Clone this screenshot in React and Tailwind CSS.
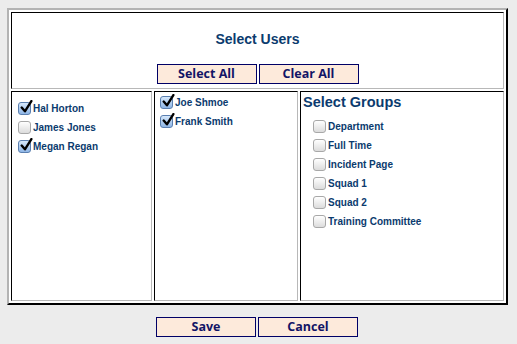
import { useState } from 'react';

const users1 = [
    { name: 'Hal Horton', checked: true },
    { name: 'James Jones', checked: false },
    { name: 'Megan Regan', checked: true },
];

const users2 = [
    { name: 'Joe Shmoe', checked: true },
    { name: 'Frank Smith', checked: true },
];

const groups = ['Department', 'Full Time', 'Incident Page', 'Squad 1', 'Squad 2', 'Training Committee'];

const Box = ({ checked, onClick }) => (
    <span
        onClick={onClick}
        className={`relative w-[13px] h-[13px] shrink-0 rounded-[3px] border ${
            checked
                ? 'border-[#5a7fb0] bg-gradient-to-b from-[#d6e8fb] to-[#8fb6e6]'
                : 'border-[#a8a8a8] bg-gradient-to-b from-[#ffffff] to-[#dcdcdc]'
        }`}
    >
        {checked && (
            <svg viewBox="0 0 13 13" className="absolute left-[0px] top-[-3px] w-[14px] h-[14px]">
                <path d="M2.5 7 L5.5 10.5 L11.5 1" fill="none" stroke="#000" strokeWidth="2.2" strokeLinecap="round" strokeLinejoin="round" />
            </svg>
        )}
    </span>
);

const Row = ({ label, initial }) => {
    const [on, setOn] = useState(initial);
    return (
        <div className="flex items-center h-[19px] gap-[2px]">
            <Box checked={on} onClick={() => setOn(!on)} />
            <span className="text-[10px] font-bold text-[#0b3b6e] leading-none">{label}</span>
        </div>
    );
};

const Btn = ({ children }) => (
    <button className="w-[100px] h-[20px] bg-[#fdeadb] border border-[#000066] text-[#121466] text-[12.5px] font-bold font-['Open_Sans',sans-serif] leading-none">
        {children}
    </button>
);

const cell = 'border border-t-black border-l-black border-r-[#b8b8b8] border-b-[#b8b8b8] bg-white';

export default function App() {
    return (
        <div className="w-[517px] h-[344px] bg-[#ececec] font-['Liberation_Sans',Arial,sans-serif] pt-[8px] pl-[7px]">
            <div className="w-[501px] h-[297px] border-2 border-t-[#b3b3b3] border-l-[#b3b3b3] border-r-black border-b-black bg-white p-[2px] flex flex-col gap-[2px]">
                <div className={`${cell} h-[77px] flex flex-col items-center`}>
                    <h1 className="mt-[19px] text-[14px] font-bold text-[#0b3b6e] leading-none">Select Users</h1>
                    <div className="mt-[18px] flex gap-[2px]">
                        <Btn>Select All</Btn>
                        <Btn>Clear All</Btn>
                    </div>
                </div>
                <div className="flex-1 flex gap-[2px]">
                    <div className={`${cell} w-[141px] pl-[6px] pt-[7px]`}>
                        {users1.map((u) => (
                            <Row key={u.name} label={u.name} initial={u.checked} />
                        ))}
                    </div>
                    <div className={`${cell} w-[144px] pl-[5px] pt-[1px]`}>
                        {users2.map((u) => (
                            <Row key={u.name} label={u.name} initial={u.checked} />
                        ))}
                    </div>
                    <div className={`${cell} flex-1 pl-[2px] pt-[1px]`}>
                        <h2 className="text-[14.5px] font-bold text-[#0b3b6e] leading-[18px]">Select Groups</h2>
                        <div className="pl-[10px] pt-[6px]">
                            {groups.map((g) => (
                                <Row key={g} label={g} initial={false} />
                            ))}
                        </div>
                    </div>
                </div>
            </div>
            <div className="flex gap-[2px] pl-[149px] mt-[12px]">
                <Btn>Save</Btn>
                <Btn>Cancel</Btn>
            </div>
        </div>
    );
}
